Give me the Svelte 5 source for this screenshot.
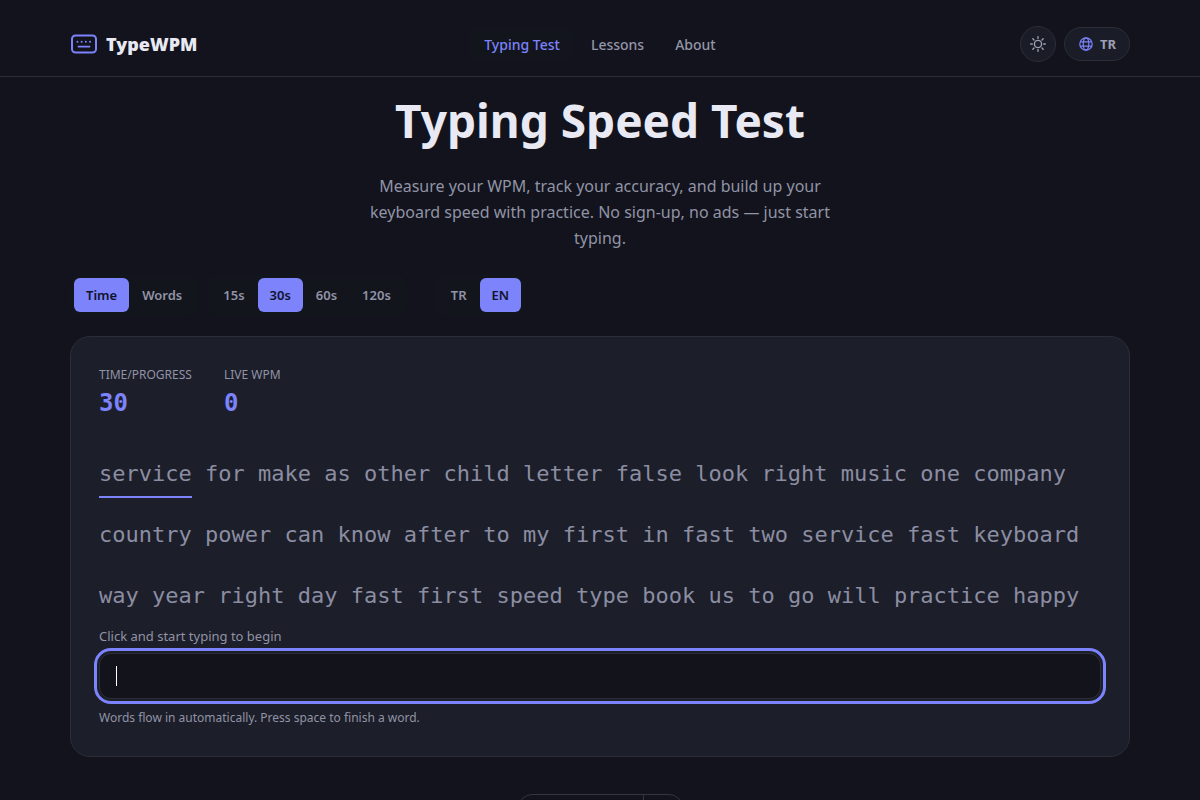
<script>
	const links = ['Typing Test', 'Lessons', 'About'];
	const rays = [0, 45, 90, 135, 180, 225, 270, 315];
	const lines = [
		'service for make as other child letter false look right music one company',
		'country power can know after to my first in fast two service fast keyboard',
		'way year right day fast first speed type book us to go will practice happy'
	].map((l) => l.split(' '));

	let page = 'Typing Test';
	let mode = 'Time';
	let limit = '30s';
	let lang = 'EN';
	let typed = '';
</script>

<header>
	<div class="wrap bar">
		<a class="brand" href="#home">
			<svg width="28" height="20" viewBox="0 0 28 20" fill="none" stroke="currentColor" stroke-width="2" stroke-linecap="round">
				<rect x="2" y="1.5" width="24" height="17" rx="3.5" />
				<path d="M8.4 12.6h11.2" stroke-width="1.7" />
				<path d="M7.4 7.8h.1M11.6 7.8h.1M15.8 7.8h.1M20 7.8h.1" stroke-width="1.9" />
			</svg>
			<span>TypeWPM</span>
		</a>
		<nav>
			{#each links as link}
				<a href="#{link}" class:active={page === link} on:click={() => (page = link)}>{link}</a>
			{/each}
		</nav>
		<div class="tools">
			<button class="theme" aria-label="Toggle theme">
				<svg width="18" height="18" viewBox="0 0 18 18" fill="none" stroke="currentColor" stroke-width="1.4" stroke-linecap="round">
					<circle cx="9" cy="9" r="3.6" />
					{#each rays as r}
						<path d="M9 1.7v1.6" transform="rotate({r} 9 9)" />
					{/each}
				</svg>
			</button>
			<button class="lang">
				<svg width="14" height="14" viewBox="0 0 14 14" fill="none" stroke="currentColor" stroke-width="1.2">
					<circle cx="7" cy="7" r="6.2" />
					<ellipse cx="7" cy="7" rx="2.8" ry="6.2" />
					<path d="M1.3 4.8h11.4M1.3 9.2h11.4" />
				</svg>
				TR
			</button>
		</div>
	</div>
</header>

<main class="wrap">
	<section class="hero">
		<h1>Typing Speed Test</h1>
		<p>Measure your WPM, track your accuracy, and build up your keyboard speed with practice. No sign-up, no ads — just start typing.</p>
	</section>

	<div class="controls">
		<div class="group">
			{#each ['Time', 'Words'] as m}
				<button class:on={mode === m} on:click={() => (mode = m)}>{m}</button>
			{/each}
		</div>
		<div class="group">
			{#each ['15s', '30s', '60s', '120s'] as t}
				<button class:on={limit === t} on:click={() => (limit = t)}>{t}</button>
			{/each}
		</div>
		<div class="sep"></div>
		<div class="group">
			{#each ['TR', 'EN'] as l}
				<button class:on={lang === l} on:click={() => (lang = l)}>{l}</button>
			{/each}
		</div>
	</div>

	<section class="card">
		<div class="stats">
			<div>
				<div class="label">Time/Progress</div>
				<div class="value">30</div>
			</div>
			<div>
				<div class="label">Live WPM</div>
				<div class="value">0</div>
			</div>
		</div>
		<div class="words">
			{#each lines as line, i}
				<div class="line">
					{#each line as word, j}<span class:current={i === 0 && j === 0}>{word}</span>{' '}{/each}
				</div>
			{/each}
		</div>
		<label for="typed">Click and start typing to begin</label>
		<div class="field">
			<input id="typed" type="text" autocomplete="off" spellcheck="false" bind:value={typed} />
			{#if !typed}<span class="caret"></span>{/if}
		</div>
		<p class="hint">Words flow in automatically. Press space to finish a word.</p>
	</section>

	<div class="dock"><span></span><span></span></div>
</main>

<style>
:global(body) {
	background: #12131c;
	color: #e8e9f3;
	font-family: "Noto Sans", "Open Sans", sans-serif;
}
:global(#app) {
	height: 100vh;
	overflow: hidden;
}
.wrap {
	max-width: 1060px;
	margin: 0 auto;
	padding: 0 20px;
}
button {
	font: inherit;
	color: inherit;
	border: 0;
	background: none;
	cursor: pointer;
}
header {
	border-bottom: 1px solid #2b2d39;
}
.bar {
	display: grid;
	grid-template-columns: 1fr auto 1fr;
	align-items: center;
	height: 64px;
	padding-top: 12px;
}
a {
	text-decoration: none;
	color: inherit;
}
.brand {
	display: flex;
	align-items: center;
	gap: 8px;
	font-size: 18px;
	font-weight: 900;
	line-height: 24px;
}
.brand svg {
	color: #7c83fb;
}
nav {
	display: flex;
	gap: 3px;
}
nav a {
	padding: 9px 14px 7px;
	border-radius: 8px;
	font-size: 14px;
	line-height: 20px;
	font-weight: 500;
	color: #9395a8;
}
nav a.active {
	color: #7c83fb;
	background: #13151d;
}
.tools {
	display: flex;
	justify-content: flex-end;
	align-items: center;
	gap: 8px;
}
.theme, .lang {
	display: flex;
	align-items: center;
	justify-content: center;
	box-sizing: border-box;
	border: 1px solid #2b2d39;
	background: #1a1c27;
	color: #9d9fb2;
}
.theme {
	width: 36px;
	height: 36px;
	padding: 0;
	border-radius: 50%;
}
.lang {
	gap: 7px;
	height: 34px;
	padding: 0 13px 0 14px;
	border-radius: 17px;
	font-size: 13px;
	font-weight: 700;
}
.lang svg {
	color: #7c83fb;
}
.hero {
	padding-top: 15px;
	text-align: center;
}
h1 {
	margin: 0;
	font-size: 46px;
	line-height: 56px;
	font-weight: 700;
}
.hero p {
	max-width: 480px;
	margin: 25px auto 0;
	font-size: 16px;
	line-height: 26px;
	color: #9193a6;
}
.controls {
	display: flex;
	gap: 9px;
	margin-top: 23px;
}
.group {
	display: flex;
	gap: 1px;
	padding: 4px;
	border-radius: 10px;
	background: #13151d;
}
.group button {
	padding: 0 12px;
	border-radius: 6px;
	font-size: 13px;
	line-height: 34px;
	font-weight: 600;
	color: #9193a6;
}
.group button.on {
	background: #7c83fb;
	color: #11132b;
}
.sep {
	width: 10px;
}
.card {
	margin-top: 20px;
	padding: 28px;
	border: 1px solid #2b2d39;
	border-radius: 20px;
	background: #1c1e29;
}
.stats {
	display: flex;
	gap: 32px;
}
.label {
	font-size: 12px;
	line-height: 20px;
	text-transform: uppercase;
	color: #9193a6;
}
.value {
	font-family: "DejaVu Sans Mono", monospace;
	font-size: 24px;
	line-height: 36px;
	font-weight: 700;
	color: #7c83fb;
}
.words {
	margin-top: 22px;
	font-family: "DejaVu Sans Mono", monospace;
	font-size: 22px;
	color: #8b8da2;
}
.line {
	line-height: 61px;
	white-space: nowrap;
}
.current {
	padding-bottom: 10px;
	border-bottom: 2px solid #7c83fb;
}
label, .hint {
	display: block;
	margin: 0;
	font-size: 13px;
	line-height: 20px;
	color: #9193a6;
}
.hint {
	font-size: 12px;
}
.field {
	position: relative;
	margin: 7px 0 9px;
}
input {
	display: block;
	width: 100%;
	height: 46px;
	box-sizing: border-box;
	padding: 0 16px;
	border: 1px solid #2b2d39;
	border-radius: 12px;
	outline: 3px solid #7c83fb;
	outline-offset: 2px;
	background: #12131b;
	color: #e8e9f3;
	font-family: "DejaVu Sans Mono", monospace;
	font-size: 16px;
}
.caret {
	position: absolute;
	left: 17px;
	top: 13px;
	width: 1px;
	height: 20px;
	background: #fff;
}
.dock {
	display: flex;
	width: 163px;
	height: 40px;
	margin: 37px auto 0;
	border: 1px solid #33353f;
	border-radius: 14px;
}
.dock span:first-child {
	flex: 1;
	border-right: 1px solid #33353f;
}
.dock span:last-child {
	width: 38px;
}
</style>
